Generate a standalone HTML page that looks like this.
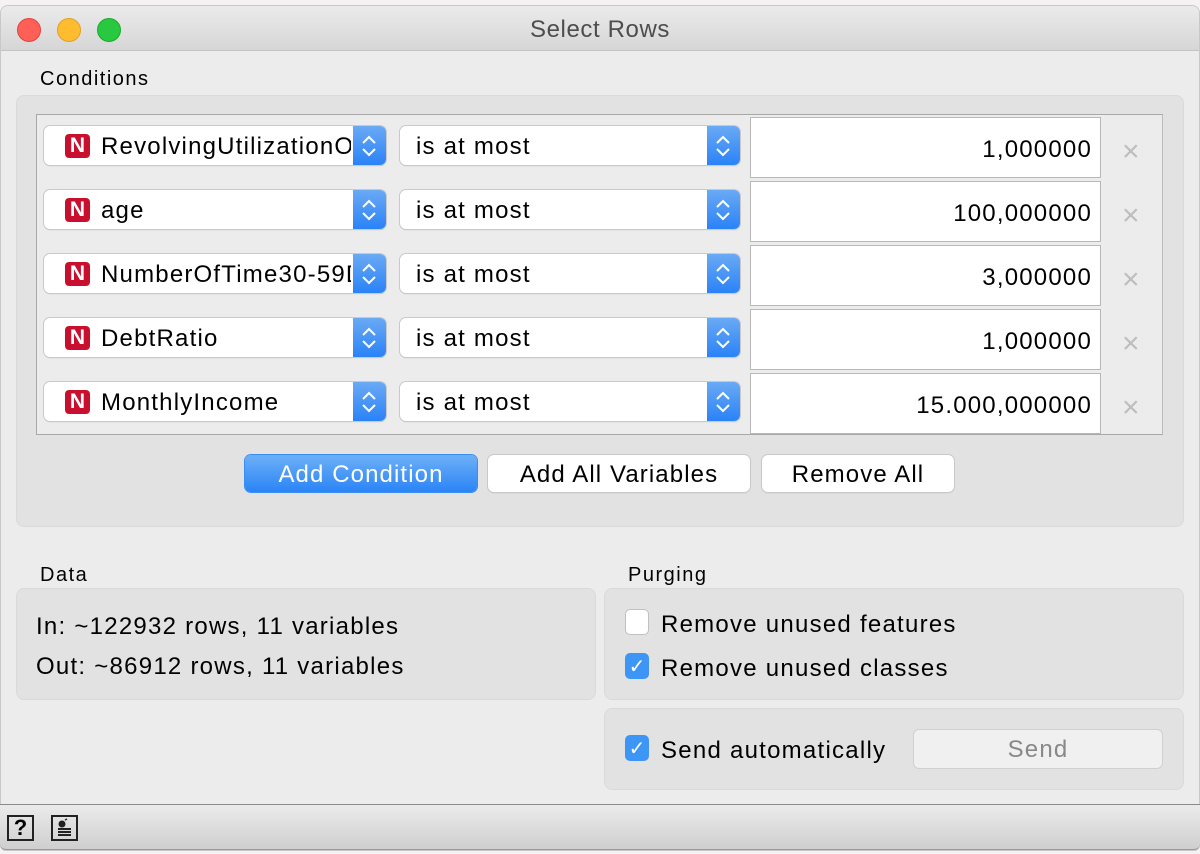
<!DOCTYPE html>
<html><head><style>
*{box-sizing:border-box;margin:0;padding:0}
body{width:1200px;height:854px;background:#f4f2f2;font-family:"Liberation Sans",sans-serif;position:relative;overflow:hidden;color:#000}
.win{position:absolute;left:0;top:5px;width:1200px;height:846px;background:#ececec;border-radius:8px 8px 6px 6px;overflow:hidden;border:1px solid #c8c8c8}
.title{position:absolute;left:0;top:0;width:100%;height:45px;background:linear-gradient(#ebebeb,#d6d6d6);border-bottom:1px solid #c4c4c4;text-align:center;font-size:24px;line-height:48px;color:#4d4d4d;letter-spacing:.6px}
.dot{position:absolute;top:12px;width:24px;height:24px;border-radius:50%}
.abs{position:absolute}
.lbl{position:absolute;font-size:20px;letter-spacing:1.5px}
.grp{position:absolute;background:#e2e2e2;border:1px solid #dadada;border-radius:8px}
.combo{position:absolute;height:39px;background:#fff;border-radius:6px;box-shadow:0 0 0 1px #c9c9c9,0 1px 1px #bbb;font-size:24px;line-height:42px;overflow:hidden;letter-spacing:1.2px}
.combo .arr{position:absolute;right:0;top:0;width:33px;height:39px;background:linear-gradient(#6aaaf5,#2a83f6)}
.nb{position:absolute;left:21px;top:8px;width:25px;height:24px;background:#c8102e;border-radius:4px;color:#fff;font-weight:bold;font-size:21px;line-height:24px;text-align:center;letter-spacing:0}
.val{position:absolute;width:351px;height:61px;background:#fff;border:1px solid #b8b8b8;font-size:24px;line-height:63px;text-align:right;padding-right:8px;letter-spacing:1.2px}
.x{position:absolute;font-size:30px;color:#bdbdbd;line-height:30px}
.btn{position:absolute;top:455px;height:37px;background:#fff;border-radius:6px;box-shadow:0 0 0 1px #c8c8c8,0 1px 1px #b5b5b5;font-size:24px;line-height:39px;text-align:center;letter-spacing:1.1px}
.cb{position:absolute;width:24px;height:26px;border-radius:5px;background:#fff;border:1px solid #c0c0c0}
.cb.on{background:#3d95f6;border-color:#3d95f6;color:#fff;font-size:20px;text-align:center;line-height:26px}
.t24{position:absolute;font-size:24px;letter-spacing:1.25px;top:2px}
</style></head><body>
<div class="win">
<div class="title">Select Rows
<div class="dot" style="left:16px;background:#fe5f57;border:1px solid #e0443e"></div>
<div class="dot" style="left:56px;background:#febc2e;border:1px solid #dea123"></div>
<div class="dot" style="left:96px;background:#28c840;border:1px solid #1aab29"></div>
</div>
</div>
<div class="lbl" style="left:40px;top:68px">Conditions</div>
<div class="grp" style="left:16px;top:95px;width:1168px;height:432px"></div>
<div class="abs" style="left:36px;top:114px;width:1127px;height:321px;background:#ececec;border:1px solid #a8a8a8;border-right-color:#bbb"></div>

<div class="combo" style="left:44px;top:126px;width:342px"><div class="nb">N</div><span style="position:absolute;left:57px;width:250px;overflow:hidden;white-space:nowrap">RevolvingUtilizationOfUnsecuredLines</span><div class="arr"><svg width="33" height="39"><path d="M10 17l6-6 6 6M10 23l6 6 6-6" stroke="#fff" stroke-width="2" fill="none"/></svg></div></div>
<div class="combo" style="left:400px;top:126px;width:340px"><span style="position:absolute;left:16px">is at most</span><div class="arr"><svg width="33" height="39"><path d="M10 17l6-6 6 6M10 23l6 6 6-6" stroke="#fff" stroke-width="2" fill="none"/></svg></div></div>
<div class="val" style="left:750px;top:117px">1,000000</div>
<div class="x" style="left:1122px;top:137px">×</div>

<div class="combo" style="left:44px;top:190px;width:342px"><div class="nb">N</div><span style="position:absolute;left:57px">age</span><div class="arr"><svg width="33" height="39"><path d="M10 17l6-6 6 6M10 23l6 6 6-6" stroke="#fff" stroke-width="2" fill="none"/></svg></div></div>
<div class="combo" style="left:400px;top:190px;width:340px"><span style="position:absolute;left:16px">is at most</span><div class="arr"><svg width="33" height="39"><path d="M10 17l6-6 6 6M10 23l6 6 6-6" stroke="#fff" stroke-width="2" fill="none"/></svg></div></div>
<div class="val" style="left:750px;top:181px">100,000000</div>
<div class="x" style="left:1122px;top:201px">×</div>

<div class="combo" style="left:44px;top:254px;width:342px"><div class="nb">N</div><span style="position:absolute;left:57px;width:250px;overflow:hidden;white-space:nowrap">NumberOfTime30-59DaysPastDue</span><div class="arr"><svg width="33" height="39"><path d="M10 17l6-6 6 6M10 23l6 6 6-6" stroke="#fff" stroke-width="2" fill="none"/></svg></div></div>
<div class="combo" style="left:400px;top:254px;width:340px"><span style="position:absolute;left:16px">is at most</span><div class="arr"><svg width="33" height="39"><path d="M10 17l6-6 6 6M10 23l6 6 6-6" stroke="#fff" stroke-width="2" fill="none"/></svg></div></div>
<div class="val" style="left:750px;top:245px">3,000000</div>
<div class="x" style="left:1122px;top:265px">×</div>

<div class="combo" style="left:44px;top:318px;width:342px"><div class="nb">N</div><span style="position:absolute;left:57px">DebtRatio</span><div class="arr"><svg width="33" height="39"><path d="M10 17l6-6 6 6M10 23l6 6 6-6" stroke="#fff" stroke-width="2" fill="none"/></svg></div></div>
<div class="combo" style="left:400px;top:318px;width:340px"><span style="position:absolute;left:16px">is at most</span><div class="arr"><svg width="33" height="39"><path d="M10 17l6-6 6 6M10 23l6 6 6-6" stroke="#fff" stroke-width="2" fill="none"/></svg></div></div>
<div class="val" style="left:750px;top:309px">1,000000</div>
<div class="x" style="left:1122px;top:329px">×</div>

<div class="combo" style="left:44px;top:382px;width:342px"><div class="nb">N</div><span style="position:absolute;left:57px">MonthlyIncome</span><div class="arr"><svg width="33" height="39"><path d="M10 17l6-6 6 6M10 23l6 6 6-6" stroke="#fff" stroke-width="2" fill="none"/></svg></div></div>
<div class="combo" style="left:400px;top:382px;width:340px"><span style="position:absolute;left:16px">is at most</span><div class="arr"><svg width="33" height="39"><path d="M10 17l6-6 6 6M10 23l6 6 6-6" stroke="#fff" stroke-width="2" fill="none"/></svg></div></div>
<div class="val" style="left:750px;top:373px;height:61px">15.000,000000</div>
<div class="x" style="left:1122px;top:393px">×</div>

<div class="btn" style="left:245px;width:232px;background:linear-gradient(#6db0f7,#2a84f6);color:#fff;box-shadow:0 0 0 1px #3a8ef0">Add Condition</div>
<div class="btn" style="left:488px;width:262px">Add All Variables</div>
<div class="btn" style="left:762px;width:192px">Remove All</div>

<div class="lbl" style="left:40px;top:564px">Data</div>
<div class="grp" style="left:16px;top:588px;width:580px;height:112px"></div>
<div class="t24" style="left:36px;top:613px">In: ~122932 rows, 11 variables</div>
<div class="t24" style="left:36px;top:653px">Out: ~86912 rows, 11 variables</div>

<div class="lbl" style="left:628px;top:564px">Purging</div>
<div class="grp" style="left:604px;top:588px;width:580px;height:112px"></div>
<div class="cb" style="left:625px;top:609px"></div>
<div class="t24" style="left:661px;top:611px">Remove unused features</div>
<div class="cb on" style="left:625px;top:653px">✓</div>
<div class="t24" style="left:661px;top:655px">Remove unused classes</div>

<div class="grp" style="left:604px;top:708px;width:580px;height:82px"></div>
<div class="cb on" style="left:625px;top:735px">✓</div>
<div class="t24" style="left:661px;top:737px">Send automatically</div>
<div class="abs" style="left:913px;top:729px;width:250px;height:40px;background:#f0f0f0;border:1px solid #d0d0d0;border-radius:6px;font-size:24px;line-height:40px;text-align:center;color:#888;letter-spacing:1.2px">Send</div>

<div class="abs" style="left:0;top:804px;width:1200px;height:46px;background:linear-gradient(#ebebeb,#cfcfcf);border-top:1px solid #8a8a8a;border-bottom:1px solid #999;border-radius:0 0 6px 6px"></div>
<div class="abs" style="left:7px;top:815px;width:27px;height:26px;border:2px solid #222;font-weight:bold;font-size:22px;line-height:22px;text-align:center">?</div>
<div class="abs" style="left:51px;top:815px;width:27px;height:26px;border:2px solid #222">
<svg width="23" height="22" style="position:absolute;left:0;top:0"><circle cx="9" cy="7" r="3.5" fill="#222"/><path d="M12 3l2-1" stroke="#222" stroke-width="1.5"/><path d="M5 12h13M5 15h13M5 18h13" stroke="#222" stroke-width="2"/></svg></div>
</body></html>
